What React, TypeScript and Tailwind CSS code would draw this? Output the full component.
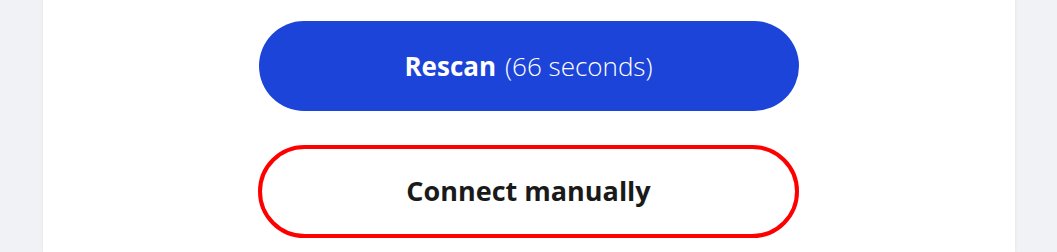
export default function App() {
  return (
    <div className="w-[1057px] h-[252px] bg-[#f1f2f6] overflow-hidden" style={{ fontFamily: '"Open Sans", "Noto Sans", sans-serif' }}>
      <div className="mx-auto w-[972px] h-full bg-white shadow-[0_0_3px_rgba(0,0,0,0.08)] flex flex-col items-center pt-[21px]">
        <button className="w-[540px] h-[90px] rounded-full bg-[#1c44d8] text-white text-[26px] flex items-center justify-center">
          <span className="font-bold">Rescan</span>
          <span className="font-light ml-[9px]">(66 seconds)</span>
        </button>
        <button className="mt-[34px] w-[541px] h-[93px] rounded-full border-4 border-[#ff0000] bg-white text-[#1a1a1a] text-[27px] font-bold flex items-center justify-center">
          Connect manually
        </button>
      </div>
    </div>
  );
}
